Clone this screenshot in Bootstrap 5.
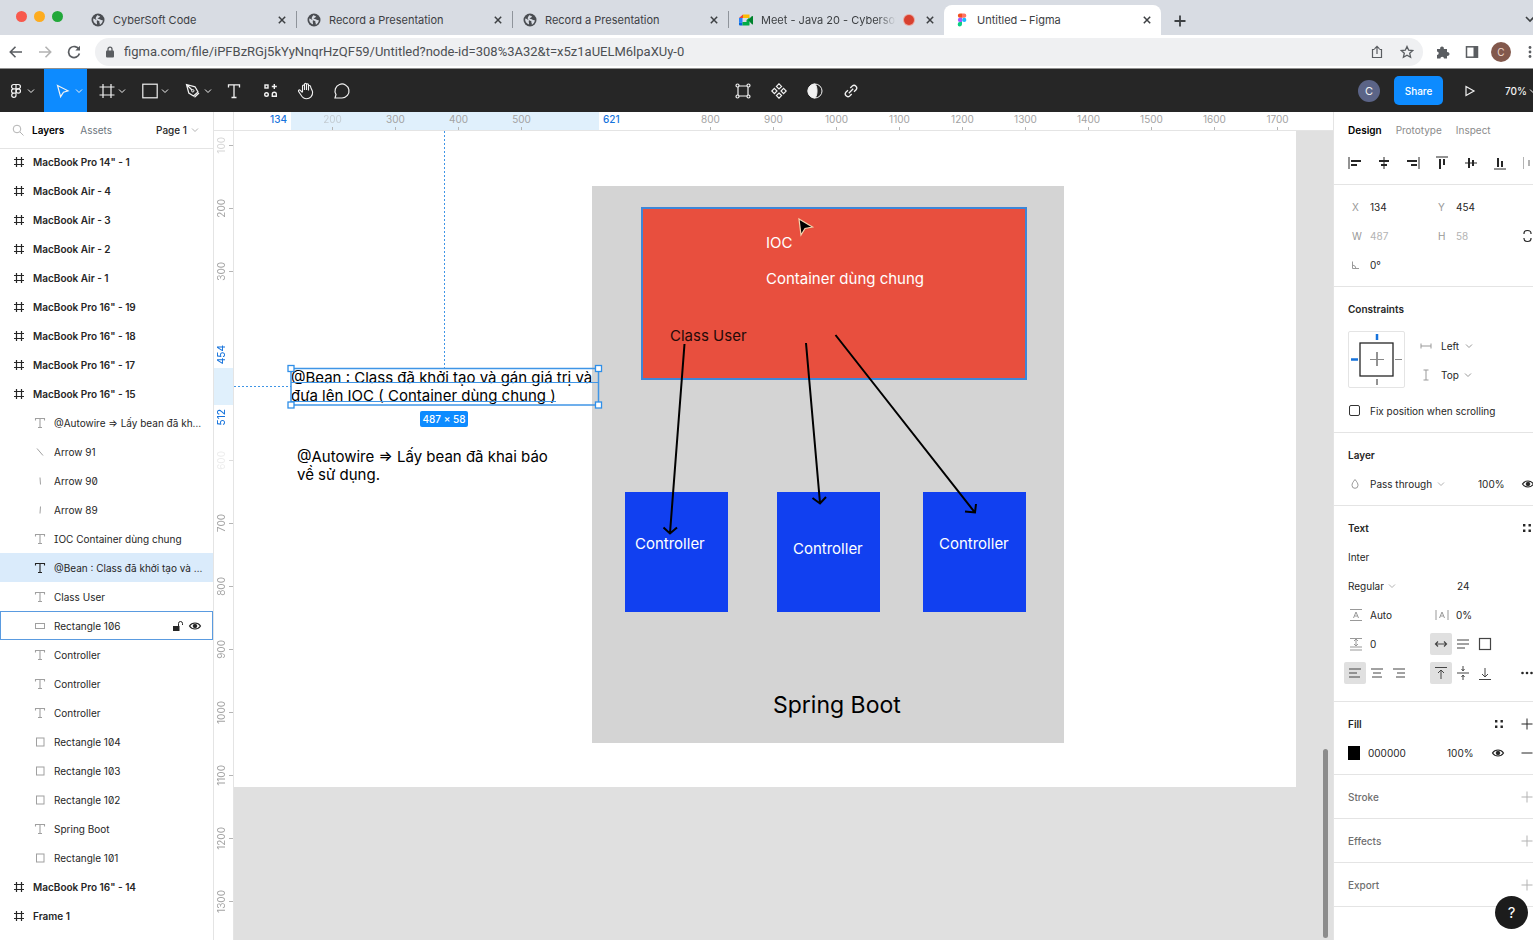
<!DOCTYPE html>
<html lang="en">
<head>
<meta charset="utf-8">
<meta name="viewport" content="width=device-width, initial-scale=1">
<title>Untitled – Figma</title>
<link href="https://cdn.jsdelivr.net/npm/bootstrap@5.3.0/dist/css/bootstrap.min.css" rel="stylesheet">
<style>
:root { --blue:#0d8bff; --line:#e4e4e4; --soft:#8b8b8b; --ink:#262626; }
body { font-family:"Inter","Liberation Sans",sans-serif; font-size:10px; line-height:16px; color:var(--ink); background:#fff; }
button, input, select { font:inherit; color:inherit; background:none; border:0; padding:0; margin:0; border-radius:0; }
input:focus-visible, select:focus-visible, button:focus-visible { outline:1px solid var(--blue); }
a { color:inherit; text-decoration:none; }
svg { display:block; flex:none; fill:none; stroke:currentColor; stroke-width:1; }
h2 { font-size:10px; line-height:16px; font-weight:600; margin:0; }
ul { list-style:none; margin:0; padding:0; }
.i8 { width:8px; height:8px; } .i12 { width:12px; height:12px; } .i14 { width:14px; height:14px; }
.i16 { width:16px; height:16px; } .i18 { width:18px; height:18px; }
.flat { stroke:none; }

/* browser window */
.tabstrip { height:35px; background:#d8dce3; font-size:11px; color:#3d4043; padding-left:16px; }
.lights { width:64px; height:34px; gap:7px; }
.light-dot { width:11px; height:11px; border-radius:50%; background:#f8594d; }
.light-dot.amber { background:#fdac1f; } .light-dot.green { background:#22a83a; }
.browser-tab { width:216px; height:30px; padding:0 10px 0 11px; position:relative; }
.browser-tab + .browser-tab::before { content:""; width:1px; height:17px; background:#8f949b; position:absolute; left:0; top:6px; }
.browser-tab.current { background:#fff; border-radius:8px 8px 0 0; width:217px; }
.browser-tab.current::before { display:none; }
.tab-title { flex:1; min-width:0; overflow:hidden; white-space:nowrap; }
.tab-title.fading { -webkit-mask-image:linear-gradient(90deg,#000 86%,transparent); mask-image:linear-gradient(90deg,#000 86%,transparent); }
.rec { width:10px; height:10px; border-radius:50%; background:#d8402f; box-shadow:0 0 0 1px #e9a59d; }
.new-tab { margin-left:13px; stroke-width:2; }
.addressbar { height:34px; color:#5a5d61; padding-left:9px; border-bottom:1px solid #8f8f8f; }
.nav-set { gap:15px; margin-right:14px; }
.omnibox { height:28px; border-radius:14px; background:#eff0f2; padding:0 9px; }
.omnibox input { flex:1; min-width:0; font-family:Roboto,"Inter",sans-serif; font-size:13px; color:#4c4f53; }
.ext-set { gap:15px; margin-left:13px; }
.profile { width:20px; height:20px; border-radius:50%; background:#82584c; color:#f0d9d0; margin-left:12px; }

/* editor toolbar */
.toolbar-dark { height:43px; background:#262626; color:#f2f2f2; }
.tool { width:36px; height:43px; display:flex; align-items:center; justify-content:center; }
.tool.wide { width:43px; gap:3px; padding-left:8px; }
.tool.menu-btn { width:44px; gap:5px; padding-left:0; }
.tool.picked { background:var(--blue); }
.tools-left { flex:12 1 0; } .tools-right { flex:11 1 0; }
.user-dot { width:22px; height:22px; border-radius:50%; background:#5b6487; font-size:11px; margin-right:14px; }
.share { width:49px; height:29px; border-radius:5px; background:var(--blue); color:#fff; font-weight:500; font-size:10px; }
.zoom-btn { gap:2px; }

/* layers */
.layers { width:213px; overflow:hidden; }
.panel-head { height:37px; border-bottom:1px solid var(--line); padding:0 14px 0 12px; }
.layers ul { margin-top:-2px; }
.layer { height:29px; padding:0 10px 0 13px; gap:8px; }
.layer > button { flex:1; min-width:0; text-align:left; overflow:hidden; text-overflow:ellipsis; white-space:nowrap; font-feature-settings:"zero","cv08"; }
.layer.frame-row { font-weight:600; }
.layer.child { padding-left:34px; }
.layer.child > svg { color:#a0a0a0; }
.layer.chosen { background:#daebfb; }
.layer.chosen > svg { color:#222; }
.layer.hovered { border:1px solid #5a9be0; padding-left:33px; }
.layer.hovered button.icon-only { flex:none; }
.layer.hovered button.icon-only + button.icon-only { margin-left:-4px; }

/* rulers */
.stage { display:grid; grid-template-columns:21px 1fr; grid-template-rows:19px 1fr; min-width:0; }
.corner, .ruler-v { border-left:1px solid var(--line); border-right:1px solid var(--line); }
.corner, .ruler-h { border-bottom:1px solid var(--line); }
.ruler-h, .ruler-v { position:relative; overflow:hidden; color:#a3a3a3; line-height:14px; }
.ruler-h { padding-left:4px; }
.ruler-h ol, .ruler-v ol { list-style:none; margin:0; padding:0; display:flex; }
.ruler-v ol { flex-direction:column; margin-top:-17px; }
.ruler-h li { width:63px; height:18px; flex:none; text-align:center; background:linear-gradient(#b5b5b5,#b5b5b5) bottom center/1px 3px no-repeat; }
.ruler-v li { height:63px; flex:none; display:flex; align-items:center; background:linear-gradient(#b5b5b5,#b5b5b5) right center/4px 1px no-repeat; }
.ruler-v span { writing-mode:vertical-rl; transform:rotate(180deg); line-height:14px; }
.ruler-h li.blank, .ruler-v li.blank { background:none; }
.faint { opacity:.45; }
.band-h { position:absolute; left:57px; top:0; width:308px; height:18px; background:#e0f0fc; }
.band-v { position:absolute; left:0; top:237px; width:19px; height:37px; background:#e0f0fc; }
.ruler-h ol { position:relative; }
.mark-no { position:absolute; color:#1673dc; font-weight:500; }
.mark-x1 { left:36px; top:0; } .mark-x2 { left:369px; top:0; }
.ruler-v .mark-y1 { left:0; top:214px; } .ruler-v .mark-y2 { left:0; top:278px; }

/* canvas */
.board { position:relative; overflow:hidden; background:#e0e0e0; color:#000; font-size:15px; line-height:18px; }
.board > * { position:absolute; white-space:pre; margin:0; }
#artboard { left:0; top:0; width:1062px; height:656px; background:#fff; }
#rect101 { left:358px; top:55px; width:472px; height:557px; background:#d4d4d4; }
#rect106 { left:407px; top:76px; width:386px; height:173px; background:#e84f3e; border:2px solid #3d86d8; }
.blue-rect { top:361px; width:103px; height:120px; background:#1140f0; }
#rect104 { left:391px; } #rect103 { left:543px; } #rect102 { left:689px; }
.pale { color:#fff; }
#txtIoc { left:532px; top:103px; }
#txtUser { left:436px; top:196px; color:#240a08; }
#txtC1 { left:401px; top:404px; } #txtC2 { left:559px; top:409px; } #txtC3 { left:705px; top:404px; }
#txtSpring { left:539px; top:560px; font-size:23px; line-height:28px; }
#txtBean { left:57px; top:238px; } #txtAuto { left:63px; top:317px; }
#overlay { left:0; top:0; width:1098px; height:809px; }
#sizeTag { left:186px; top:280px; width:48px; height:16px; border-radius:2px; background:var(--blue); color:#fff; font-size:10px; line-height:16px; font-weight:500; text-align:center; }
#scrollThumb { right:5px; top:618px; bottom:2px; width:5px; border-radius:3px; background:#8c8c8c; }

/* properties */
.props { width:200px; border-left:1px solid var(--line); overflow:hidden; }
.props section { padding:7px 0 7px 14px; border-bottom:1px solid var(--line); }
.props .tabs { height:37px; padding:0 0 2px 14px; gap:14px; color:var(--soft); }
.aligns { height:36px; padding-left:6px; border-bottom:1px solid var(--line); }
.aligns button { width:29px; height:27px; flex:none; display:flex; align-items:center; justify-content:center; }
.prow { height:29px; display:flex; align-items:center; }
.slot { width:22px; flex:none; color:#999; padding-left:1px; }
.slot.letter { padding-left:4px; }
.val { width:64px; flex:none; display:flex; align-items:center; gap:5px; }
.val.tight { width:60px; }
.val input, .val-short { width:44px; }
.val svg.i8 { color:#999; }
select { appearance:none; -webkit-appearance:none; }
.dim { color:#b3b3b3; }
.to-end { margin-left:auto; }
.cons { height:57px; margin:8px 0; gap:14px; }
.cons-box { width:57px; height:57px; border:1px solid var(--line); border-radius:2px; }
.tick { appearance:none; width:11px; height:11px; border:1px solid #333; border-radius:2px; }
.tick:checked { background:var(--blue); }
.toggle { width:22px; height:22px; display:flex; align-items:center; justify-content:center; border-radius:2px; color:#444; }
.toggle.on { background:#e0e0e0; }
.toggle-set { width:86px; margin-left:-4px; }
.weight-set { width:109px; } .opacity-box { width:43px; } .hex-box { width:79px; }
.props .text-sec { padding-bottom:14px; }
.swatch { width:14px; height:14px; background:#000; margin-right:8px; }
.props section.closed { height:44px; color:#6f6f6f; }
.props section.closed h2 { font-weight:500; }
.help { position:fixed; right:5px; bottom:11px; width:33px; height:33px; border-radius:50%; background:#1c1c1c; color:#fff; font-size:15px; }
</style>
</head>
<body class="vh-100 overflow-hidden d-flex flex-column">
<svg width="0" height="0" class="position-absolute" aria-hidden="true">
  <symbol id="chev" viewBox="0 0 8 8"><path d="M1 2.500 4 5.500 7 2.500"/></symbol>
  <symbol id="x" viewBox="0 0 8 8"><path d="M.8.8l6.400 6.400M7.200.8.8 7.200" stroke-width="1.500"/></symbol>
  <symbol id="plus" viewBox="0 0 12 12"><path d="M6 .5v11M.5 6h11"/></symbol>
  <symbol id="globe" viewBox="0 0 14 14"><circle cx="7" cy="7" r="6.500" fill="#4a4d52" stroke="none"/><path d="M2.200 5.600c1.600.2 2.200 1.400 3.600 1.400.6.900-.5 1.500.1 2.400l.2 2c-2.800-.6-4.300-3-3.900-5.800zM6.300 2c.6 1.200 2.200.4 2.700 1.700-.6 1.200-1.900.6-2.500 1.700.9.700 2.100.2 2.900 1.200.5.700 1.500.6 2.500.7-.3 2-1.500 3.600-3.100 4.400.5-1.700-.9-2-.4-3.500C7 7.600 5 7 4.700 5.400 4.600 4 6 3.200 6.300 2z" fill="#d8dce3" stroke="none"/></symbol>
  <symbol id="hash" viewBox="0 0 12 12"><path d="M3.500 1v10M8.500 1v10M1 3.500h10M1 8.500h10" stroke-width="1.200"/></symbol>
  <symbol id="tee" viewBox="0 0 12 12"><path d="M1.500 3.500v-2h9v2M6 1.500v9M4 10.500h4" stroke-width="1.100"/></symbol>
  <symbol id="sq" viewBox="0 0 12 12"><rect x="2.500" y="2" width="7.500" height="8"/></symbol>
  <symbol id="wide" viewBox="0 0 12 12"><rect x="1.500" y="3.500" width="9" height="5"/></symbol>
  <symbol id="eye" viewBox="0 0 14 12"><path d="M1.500 6c2.500-4 8.500-4 11 0-2.500 4-8.500 4-11 0z" stroke-width="1.200"/><circle cx="7" cy="6" r="1.800" fill="currentColor"/></symbol>
  <symbol id="dots4" viewBox="0 0 12 12"><path d="M2 2h2.400v2.400H2zM7.500 2h2.400v2.400H7.500zM2 7.500h2.400v2.400H2zM7.500 7.500h2.400v2.400H7.500z" fill="currentColor" stroke="none"/></symbol>
</svg>

<header>
  <div class="tabstrip d-flex align-items-end">
    <div class="lights d-flex align-items-center pb-1">
      <span class="light-dot"></span><span class="light-dot amber"></span><span class="light-dot green"></span>
    </div>
    <div class="browser-tab d-flex align-items-center gap-2"><svg class="i14"><use href="#globe"/></svg><a href="#" class="tab-title">CyberSoft Code</a><button type="button" aria-label="Close tab"><svg class="i8"><use href="#x"/></svg></button></div>
    <div class="browser-tab d-flex align-items-center gap-2"><svg class="i14"><use href="#globe"/></svg><a href="#" class="tab-title">Record a Presentation</a><button type="button" aria-label="Close tab"><svg class="i8"><use href="#x"/></svg></button></div>
    <div class="browser-tab d-flex align-items-center gap-2"><svg class="i14"><use href="#globe"/></svg><a href="#" class="tab-title">Record a Presentation</a><button type="button" aria-label="Close tab"><svg class="i8"><use href="#x"/></svg></button></div>
    <div class="browser-tab d-flex align-items-center gap-2">
      <svg class="i14 flat" viewBox="0 0 14 14"><path d="M0 5 4 1.500V5z" fill="#ea4335"/><path d="M4 1.500h6.500V5H4z" fill="#fbbc04"/><path d="M0 5h3.500v4.500H0z" fill="#2684fc"/><path d="M0 9.500h3.500v3H1q-1 0-1-1z" fill="#0066da"/><path d="M3.500 9h4v-2l3-2.500v7.500q0 .5-.8.500H3.500z" fill="#00ac47"/><path d="M9 7l4-4q1-.3 1 .5v7.500q0 .7-1 .2z" fill="#00832d"/></svg>
      <a href="#" class="tab-title fading">Meet - Java 20 - Cybersoft</a><span class="rec"></span><button type="button" class="ms-1" aria-label="Close tab"><svg class="i8"><use href="#x"/></svg></button></div>
    <div class="browser-tab current d-flex align-items-center gap-2">
      <svg class="i14 flat" viewBox="0 0 14 14"><path d="M5 .5h2v4.300H5a2.150 2.150 0 010-4.300z" fill="#f24e1e"/><path d="M7 .5h2.200a2.150 2.150 0 010 4.300H7z" fill="#ff7262"/><path d="M5 4.800h2v4.300H5a2.150 2.150 0 010-4.300z" fill="#a259ff"/><circle cx="9.200" cy="6.950" r="2.150" fill="#1abcfe"/><path d="M5 9.100h2v2.200a2.150 2.150 0 11-2-2.200z" fill="#0acf83"/></svg>
      <a href="#" class="tab-title">Untitled – Figma</a><button type="button" aria-label="Close tab"><svg class="i8"><use href="#x"/></svg></button></div>
    <button type="button" class="new-tab mb-2" aria-label="New tab"><svg class="i12" viewBox="0 0 12 12"><path d="M6 .5v11M.5 6h11" stroke-width="1.800"/></svg></button>
    <button type="button" class="ms-auto mb-2 pb-1" aria-label="Search tabs"><svg width="8" height="8" viewBox="0 0 8 8"><path d="M1 2l4 4 4-4" stroke-width="1.600"/></svg></button>
  </div>
  <div class="addressbar d-flex align-items-center">
    <div class="nav-set d-flex">
      <button type="button" aria-label="Back"><svg class="i14" viewBox="0 0 14 14"><path d="M13 7H1.500M6.500 1.800 1.300 7l5.200 5.200" stroke-width="1.600"/></svg></button>
      <button type="button" aria-label="Forward" class="dim"><svg class="i14" viewBox="0 0 14 14"><path d="M1 7h11.500M7.500 1.800 12.700 7l-5.200 5.200" stroke-width="1.600"/></svg></button>
      <button type="button" aria-label="Reload"><svg class="i14" viewBox="0 0 14 14"><path d="M12 4.500A5.500 5.500 0 1012.400 8.500" stroke-width="1.700"/><path d="M13 .8v4.700H8.300z" fill="currentColor" stroke="none"/></svg></button>
    </div>
    <div class="omnibox flex-grow-1 d-flex align-items-center">
      <svg class="i12 me-2" viewBox="0 0 12 12"><rect x="2" y="4.500" width="8" height="7" rx="1" fill="currentColor" stroke="none"/><path d="M4 5V3.200a2 2 0 014 0V5" stroke-width="1.300"/></svg>
      <input type="text" aria-label="Address" value="figma.com/file/iPFBzRGj5kYyNnqrHzQF59/Untitled?node-id=308%3A32&amp;t=x5z1aUELM6lpaXUy-0">
      <button type="button" aria-label="Share page" class="me-3"><svg class="i14" viewBox="0 0 14 14"><path d="M4.500 4.500H2.500V12.500h9V4.500h-2M7 9V1.500M4.500 3.800 7 1.300l2.500 2.500" stroke-width="1.200"/></svg></button>
      <button type="button" aria-label="Bookmark"><svg class="i14" viewBox="0 0 14 14"><path d="M7 1.500l1.700 3.700 4 .4-3 2.700.9 4L7 10.200 3.400 12.300l.9-4-3-2.700 4-.4z" stroke-width="1.300"/></svg></button>
    </div>
    <div class="ext-set d-flex">
      <button type="button" aria-label="Extensions"><svg class="i14" viewBox="0 0 14 14"><path d="M1 4h3.200a1.900 1.900 0 113.600 0H11v3.200a1.900 1.900 0 110 3.600V13.500H8a1.800 1.800 0 10-3.600 0H1v-3.500a1.700 1.700 0 100-3.400z" fill="currentColor" stroke="none"/></svg></button>
      <button type="button" aria-label="Side panel"><svg class="i14" viewBox="0 0 14 14"><rect x="1.500" y="1.800" width="11" height="10.400" stroke-width="1.500"/><path d="M8.500 1.500h4v11h-4z" fill="currentColor" stroke="none"/></svg></button>
    </div>
    <button type="button" class="profile me-3">C</button>
    <button type="button" aria-label="Menu"><svg class="flat" width="6" height="14" viewBox="0 0 6 14"><g fill="currentColor"><circle cx="3" cy="2.500" r="1.400"/><circle cx="3" cy="7" r="1.400"/><circle cx="3" cy="11.500" r="1.400"/></g></svg></button>
  </div>
  <div class="toolbar-dark d-flex">
    <div class="tools-left d-flex">
      <button type="button" class="tool menu-btn" aria-label="Main menu"><svg width="12" height="16" viewBox="0 0 12 16"><path d="M6 1.500H3.700a2.150 2.150 0 000 4.300H6zM6 1.500h2.300a2.150 2.150 0 010 4.300H6zM6 5.800H3.700a2.150 2.150 0 000 4.300H6zM6 10.100H3.700A2.150 2.150 0 106 12.300z" stroke-width="1.200"/><circle cx="8.300" cy="7.950" r="2.150" stroke-width="1.200"/></svg><svg class="i8"><use href="#chev"/></svg></button>
      <button type="button" class="tool wide picked" aria-label="Move"><svg class="i16" viewBox="0 0 16 16"><path d="M1.500 2.500l10.500 5.300-4.500 1.400-2.900 4.500z" stroke-width="1.200"/></svg><svg class="i8"><use href="#chev"/></svg></button>
      <button type="button" class="tool wide" aria-label="Frame"><svg class="i16" viewBox="0 0 16 16"><path d="M4 1v14M12 1v14M.5 4h15M.5 12h15" stroke-width="1.200"/></svg><svg class="i8"><use href="#chev"/></svg></button>
      <button type="button" class="tool wide" aria-label="Shape"><svg class="i16" viewBox="0 0 16 16"><rect x=".8" y="1.200" width="14.400" height="13.600" stroke-width="1.200"/></svg><svg class="i8"><use href="#chev"/></svg></button>
      <button type="button" class="tool wide" aria-label="Pen"><svg class="i16" viewBox="0 0 16 16"><path d="M1.500 1.500l8.500 2.300 3 5.200-4.500 4L3.800 10zM1.500 1.500l5.500 5.500M9.500 14.300l4.500-4.300" stroke-width="1.200"/><circle cx="7.800" cy="7.800" r="1.200"/></svg><svg class="i8"><use href="#chev"/></svg></button>
      <button type="button" class="tool" aria-label="Text"><svg class="i16" viewBox="0 0 16 16"><path d="M2.500 4.500V1.800h11v2.700M8 1.800v12.700M5.500 14.500h5" stroke-width="1.300"/></svg></button>
      <button type="button" class="tool" aria-label="Resources"><svg class="i16" viewBox="0 0 16 16"><g stroke-width="1.400"><rect x="3" y="2" width="3" height="3"/><path d="M12.300 1v5M9.800 3.500h5"/><circle cx="4.500" cy="11.500" r="1.800"/><path d="M10.300 13.300v-2a2 2 0 014 0v2z"/></g></svg></button>
      <button type="button" class="tool" aria-label="Hand"><svg class="i18" viewBox="0 0 18 18"><path d="M5.500 10V4a1 1 0 012 0v4M7.500 8V2.300a1 1 0 012 0V8M9.500 8V2.800a1 1 0 012 0v5.700M11.500 8.500V4.500a1.050 1.050 0 012.100 0c0 2 1.600 3 2 5.500.3 4-2.600 6.800-6.100 6.800-3 0-4.500-1.800-5.700-4L1.500 9.300c-.3-1.200 1-1.800 1.800-1l2.200 2.200" stroke-width="1.100"/></svg></button>
      <button type="button" class="tool" aria-label="Comment"><svg class="i18" viewBox="0 0 18 18"><path d="M2 16h7a7 7 0 10-6-3.400z" stroke-width="1.200"/></svg></button>
    </div>
    <div class="d-flex">
      <button type="button" class="tool" aria-label="Edit object"><svg class="i16" viewBox="0 0 16 16"><g stroke-width="1.200"><path d="M4 3h8M4 13h8M3 4v8M13 4v8"/><circle cx="2.500" cy="2.500" r="1.500"/><circle cx="13.500" cy="2.500" r="1.500"/><circle cx="2.500" cy="13.500" r="1.500"/><circle cx="13.500" cy="13.500" r="1.500"/></g></svg></button>
      <button type="button" class="tool" aria-label="Component"><svg class="i16" viewBox="0 0 16 16"><path d="M8 .8l2.600 2.600L8 6 5.400 3.400zM8 10l2.600 2.600L8 15.200l-2.600-2.600zM3.400 5.400 6 8l-2.600 2.600L.8 8zM12.600 5.400 15.200 8l-2.600 2.600L10 8z" stroke-width="1.200"/></svg></button>
      <button type="button" class="tool" aria-label="Mask"><svg class="i16" viewBox="0 0 16 16"><circle cx="8" cy="8" r="7"/><path d="M8 1a7 7 0 000 14c1.500-2 2-4 2-7S9.500 3 8 1z" fill="currentColor"/></svg></button>
      <button type="button" class="tool" aria-label="Link"><svg class="i16" viewBox="0 0 16 16"><path d="M7.300 5 9.300 3a2.700 2.700 0 013.800 3.800L11 8.800M8.700 11 6.700 13a2.700 2.700 0 01-3.800-3.800L5 7.200M5.800 10.200l4.400-4.400" stroke-width="1.300"/></svg></button>
    </div>
    <div class="tools-right d-flex align-items-center justify-content-end">
      <span class="user-dot d-flex align-items-center justify-content-center">C</span>
      <button type="button" class="share me-3">Share</button>
      <button type="button" class="me-4 ms-1" aria-label="Present"><svg class="i14" viewBox="0 0 14 14"><path d="M3 2.500 11 7l-8 4.500z" stroke-width="1.200"/></svg></button>
      <button type="button" class="zoom-btn d-flex align-items-center ms-1 fw-medium">70% <svg width="4" height="8" viewBox="0 0 4 8"><path d="M1 2.500 4 5.500 7 2.500"/></svg></button>
    </div>
  </div>
</header>

<main class="d-flex flex-grow-1 overflow-hidden">
  <aside class="layers d-flex flex-column flex-shrink-0">
    <div class="panel-head d-flex align-items-center flex-shrink-0">
      <button type="button" class="dim" aria-label="Search layers"><svg class="i12" viewBox="0 0 12 12"><circle cx="5" cy="5" r="3.800"/><path d="M8 8l3.500 3.500"/></svg></button>
      <a href="#" class="fw-semibold ms-2 text-black">Layers</a><a href="#" class="ms-3 text-secondary">Assets</a>
      <button type="button" class="ms-auto d-flex align-items-center gap-1 fw-medium">Page 1 <svg class="i8 dim"><use href="#chev"/></svg></button>
    </div>
    <ul>
      <li class="layer frame-row d-flex align-items-center"><svg class="i12"><use href="#hash"/></svg><button type="button">MacBook Pro 14" - 1</button></li>
      <li class="layer frame-row d-flex align-items-center"><svg class="i12"><use href="#hash"/></svg><button type="button">MacBook Air - 4</button></li>
      <li class="layer frame-row d-flex align-items-center"><svg class="i12"><use href="#hash"/></svg><button type="button">MacBook Air - 3</button></li>
      <li class="layer frame-row d-flex align-items-center"><svg class="i12"><use href="#hash"/></svg><button type="button">MacBook Air - 2</button></li>
      <li class="layer frame-row d-flex align-items-center"><svg class="i12"><use href="#hash"/></svg><button type="button">MacBook Air - 1</button></li>
      <li class="layer frame-row d-flex align-items-center"><svg class="i12"><use href="#hash"/></svg><button type="button">MacBook Pro 16" - 19</button></li>
      <li class="layer frame-row d-flex align-items-center"><svg class="i12"><use href="#hash"/></svg><button type="button">MacBook Pro 16" - 18</button></li>
      <li class="layer frame-row d-flex align-items-center"><svg class="i12"><use href="#hash"/></svg><button type="button">MacBook Pro 16" - 17</button></li>
      <li class="layer frame-row d-flex align-items-center"><svg class="i12"><use href="#hash"/></svg><button type="button">MacBook Pro 16" - 15</button></li>
      <li class="layer child d-flex align-items-center"><svg class="i12"><use href="#tee"/></svg><button type="button">@Autowire ⇒ Lấy bean đã khai báo về sử dụng.</button></li>
      <li class="layer child d-flex align-items-center"><svg class="i12" viewBox="0 0 12 12"><path d="M3 2.500l6 7"/></svg><button type="button">Arrow 91</button></li>
      <li class="layer child d-flex align-items-center"><svg class="i12" viewBox="0 0 12 12"><path d="M6 2.500l.5 7"/></svg><button type="button">Arrow 90</button></li>
      <li class="layer child d-flex align-items-center"><svg class="i12" viewBox="0 0 12 12"><path d="M6.500 2.500 6 9.500"/></svg><button type="button">Arrow 89</button></li>
      <li class="layer child d-flex align-items-center"><svg class="i12"><use href="#tee"/></svg><button type="button">IOC Container dùng chung</button></li>
      <li class="layer child chosen d-flex align-items-center"><svg class="i12"><use href="#tee"/></svg><button type="button">@Bean : Class đã khởi tạo và gán giá trị</button></li>
      <li class="layer child d-flex align-items-center"><svg class="i12"><use href="#tee"/></svg><button type="button">Class User</button></li>
      <li class="layer child hovered d-flex align-items-center"><svg class="i12"><use href="#wide"/></svg><button type="button">Rectangle 106</button><button type="button" class="icon-only" aria-label="Unlock"><svg class="i12" viewBox="0 0 12 12"><path d="M1 6h6.500v5H1z" fill="currentColor" stroke="none"/><path d="M6.500 6V3.500a2 2 0 014 0V5"/></svg></button><button type="button" class="icon-only" aria-label="Hide"><svg width="14" height="12"><use href="#eye"/></svg></button></li>
      <li class="layer child d-flex align-items-center"><svg class="i12"><use href="#tee"/></svg><button type="button">Controller</button></li>
      <li class="layer child d-flex align-items-center"><svg class="i12"><use href="#tee"/></svg><button type="button">Controller</button></li>
      <li class="layer child d-flex align-items-center"><svg class="i12"><use href="#tee"/></svg><button type="button">Controller</button></li>
      <li class="layer child d-flex align-items-center"><svg class="i12"><use href="#sq"/></svg><button type="button">Rectangle 104</button></li>
      <li class="layer child d-flex align-items-center"><svg class="i12"><use href="#sq"/></svg><button type="button">Rectangle 103</button></li>
      <li class="layer child d-flex align-items-center"><svg class="i12"><use href="#sq"/></svg><button type="button">Rectangle 102</button></li>
      <li class="layer child d-flex align-items-center"><svg class="i12"><use href="#tee"/></svg><button type="button">Spring Boot</button></li>
      <li class="layer child d-flex align-items-center"><svg class="i12"><use href="#sq"/></svg><button type="button">Rectangle 101</button></li>
      <li class="layer frame-row d-flex align-items-center"><svg class="i12"><use href="#hash"/></svg><button type="button">MacBook Pro 16" - 14</button></li>
      <li class="layer frame-row d-flex align-items-center"><svg class="i12"><use href="#hash"/></svg><button type="button">Frame 1</button></li>
      <li class="layer frame-row d-flex align-items-center"><svg class="i12"><use href="#hash"/></svg><button type="button">MacBook Pro 16" - 13</button></li>
    </ul>
  </aside>

  <div class="stage flex-grow-1">
    <div class="corner"></div>
    <div class="ruler-h">
      <div class="band-h"></div>
      <ol><li class="blank"></li><li><span class="faint">200</span></li><li>300</li><li>400</li><li>500</li><li class="blank"></li><li class="blank"></li><li>800</li><li>900</li><li>1000</li><li>1100</li><li>1200</li><li>1300</li><li>1400</li><li>1500</li><li>1600</li><li>1700</li></ol>
      <span class="mark-no mark-x1">134</span><span class="mark-no mark-x2">621</span>
    </div>
    <div class="ruler-v">
      <div class="band-v"></div>
      <ol><li><span class="faint">100</span></li><li><span>200</span></li><li><span>300</span></li><li class="blank"></li><li class="blank"></li><li class="faint"><span class="faint">600</span></li><li><span>700</span></li><li><span>800</span></li><li><span>900</span></li><li><span>1000</span></li><li><span>1100</span></li><li><span>1200</span></li><li><span>1300</span></li></ol>
      <span class="mark-no mark-y1">454</span><span class="mark-no mark-y2">512</span>
    </div>
    <div class="board">
      <div id="artboard"></div>
      <div id="rect101"></div>
      <div id="rect106"></div>
      <div id="rect104" class="blue-rect"></div><div id="rect103" class="blue-rect"></div><div id="rect102" class="blue-rect"></div>
      <p id="txtIoc" class="pale">IOC

Container dùng chung</p>
      <p id="txtUser">Class User</p>
      <p id="txtC1" class="pale">Controller</p><p id="txtC2" class="pale">Controller</p><p id="txtC3" class="pale">Controller</p>
      <p id="txtSpring">Spring Boot</p>
      <p id="txtBean">@Bean : Class đã khởi tạo và gán giá trị và
đưa lên IOC ( Container dùng chung )</p>
      <p id="txtAuto">@Autowire ⇒ Lấy bean đã khai báo
về sử dụng.</p>
      <svg id="overlay" viewBox="0 0 1098 809" aria-hidden="true">
        <g stroke="#000" stroke-width="2"><path d="M450.500 213 436 402M429.500 396.500l6.500 6 7-6"/><path d="M572 212l14 160M578.500 367l7.500 5.500 6-6.500"/><path d="M601.500 204l139 177M731 380.500l10 1 1-8.500"/></g>
        <g stroke="#3f95e6"><path d="M210.500 0v237M0 255.500h57" stroke-dasharray="2 2"/><path d="M57 251.500h307M57 270.500h265"/><rect x="57" y="237.500" width="307.500" height="36.500" stroke-width="1.500"/></g>
        <g fill="#fff" stroke="#2f8fe8" stroke-width="1.300"><rect x="54" y="234.500" width="6" height="6"/><rect x="361.500" y="234.500" width="6" height="6"/><rect x="54" y="271" width="6" height="6"/><rect x="361.500" y="271" width="6" height="6"/></g>
        <path d="M565 88l13.500 8-7.500 1.500-4 6.500z" fill="#000" stroke="#f3d6b0" stroke-width="1.200"/>
      </svg>
      <div id="sizeTag">487 × 58</div>
      <div id="scrollThumb"></div>
    </div>
  </div>

  <aside class="props flex-shrink-0">
    <div class="tabs d-flex align-items-center"><a href="#" class="fw-semibold text-black">Design</a><a href="#">Prototype</a><a href="#">Inspect</a></div>
    <div class="aligns d-flex align-items-start">
      <button type="button" aria-label="Align left"><svg class="i14" viewBox="0 0 14 14"><path d="M1 1v12"/><path d="M3 5h10M3 9h6" stroke-width="2"/></svg></button>
      <button type="button" aria-label="Align horizontal centers"><svg class="i14" viewBox="0 0 14 14"><path d="M7 1v12"/><path d="M2 5h10M4 9h6" stroke-width="2"/></svg></button>
      <button type="button" aria-label="Align right"><svg class="i14" viewBox="0 0 14 14"><path d="M13 1v12"/><path d="M1 5h10M5 9h6" stroke-width="2"/></svg></button>
      <button type="button" aria-label="Align top"><svg class="i14" viewBox="0 0 14 14"><path d="M1 1h12"/><path d="M5 3v10M9 3v6" stroke-width="2"/></svg></button>
      <button type="button" aria-label="Align vertical centers"><svg class="i14" viewBox="0 0 14 14"><path d="M1 7h12"/><path d="M5 2v10M9 4v6" stroke-width="2"/></svg></button>
      <button type="button" aria-label="Align bottom"><svg class="i14" viewBox="0 0 14 14"><path d="M1 13h12"/><path d="M5 2v9M9 5v6" stroke-width="2"/></svg></button>
      <button type="button" class="dim" aria-label="Distribute"><svg class="i14" viewBox="0 0 14 14"><path d="M1.500 1v12M12.500 1v12"/><path d="M7 4v6" stroke-width="2"/></svg></button>
    </div>
    <section>
      <div class="prow"><label class="slot letter" for="fx">X</label><span class="val"><input id="fx" value="134"></span><label class="slot letter" for="fy">Y</label><input id="fy" class="val-short" value="454"></div>
      <div class="prow"><label class="slot letter" for="fw">W</label><span class="val dim"><input id="fw" value="487"></span><label class="slot letter" for="fh">H</label><input id="fh" class="val-short dim" value="58"><button type="button" class="to-end" aria-label="Constrain proportions"><svg width="12" height="14" viewBox="0 0 12 14"><path d="M3 5V4.500a3.500 3 0 017 0V5M3 9v.5a3.500 3 0 007 0V9" stroke-width="1.200"/></svg></button></div>
      <div class="prow"><label class="slot" for="fr"><svg class="i12" viewBox="0 0 12 12" aria-label="Rotation"><path d="M3.500 2.500v7h6.500M3.500 6a4 4 0 013.500 3.500"/></svg></label><span class="val"><input id="fr" value="0°"></span></div>
    </section>
    <section>
      <div class="prow"><h2>Constraints</h2></div>
      <div class="cons d-flex">
        <svg class="cons-box" viewBox="0 0 55 55"><rect x="11" y="11" width="33" height="33" stroke-width="1.300"/><path d="M28 20v14M28 47v6"/><path d="M21 27.500h14M46 27.500h7" stroke="#888"/><path d="M28 2v6M2 27.500h7" stroke="#1673dc" stroke-width="2.500"/></svg>
        <div><div class="prow"><span class="slot"><svg class="i12" viewBox="0 0 12 12"><path d="M1 3.500v5M11 3.500v5M1 6h10"/></svg></span><span class="val"><select aria-label="Horizontal constraint"><option>Left</option></select><svg class="i8"><use href="#chev"/></svg></span></div>
        <div class="prow"><span class="slot"><svg class="i12" viewBox="0 0 12 12"><path d="M3.500 1h5M3.500 11h5M6 1v10"/></svg></span><span class="val"><select aria-label="Vertical constraint"><option>Top</option></select><svg class="i8"><use href="#chev"/></svg></span></div></div>
      </div>
      <div class="prow"><span class="slot d-flex"><input type="checkbox" id="fix" class="tick"></span><label for="fix">Fix position when scrolling</label></div>
    </section>
    <section>
      <div class="prow"><h2>Layer</h2></div>
      <div class="prow"><span class="slot"><svg class="i12" viewBox="0 0 12 12"><path d="M6 1.500C4 4 3 5.500 3 7.300a3 3 0 006 0C9 5.500 8 4 6 1.500z"/></svg></span><span class="d-flex align-items-center gap-1"><select aria-label="Blend mode"><option>Pass through</option></select><svg class="i8 dim"><use href="#chev"/></svg></span><input class="to-end opacity-box" aria-label="Layer opacity" value="100%"><button type="button" aria-label="Toggle layer"><svg width="12" height="12" viewBox="0 0 12 12"><path d="M1.500 6c2.500-4 8.500-4 11 0-2.500 4-8.500 4-11 0z" stroke-width="1.200"/><circle cx="7" cy="6" r="1.800" fill="currentColor"/></svg></button></div>
    </section>
    <section class="text-sec">
      <div class="prow"><h2>Text</h2><button type="button" class="to-end" aria-label="Text styles"><svg class="i12"><use href="#dots4"/></svg></button></div>
      <div class="prow"><input aria-label="Font family" value="Inter"></div>
      <div class="prow"><span class="weight-set d-flex align-items-center gap-1"><select aria-label="Font weight"><option>Regular</option></select><svg class="i8 dim"><use href="#chev"/></svg></span><input class="val-short" aria-label="Font size" value="24"></div>
      <div class="prow"><label class="slot" for="lh"><svg class="i14" viewBox="0 0 14 14" aria-label="Line height"><path d="M1 1.500h12M1 12.500h12M4.500 10 7 4l2.500 6M5.500 8h3"/></svg></label><span class="val"><input id="lh" value="Auto"></span><label class="slot" for="ls"><svg class="i14" viewBox="0 0 14 14" aria-label="Letter spacing"><path d="M1 2v10M13 2v10M4.500 10 7 4l2.500 6M5.500 8h3"/></svg></label><input id="ls" class="val-short" value="0%"></div>
      <div class="prow"><label class="slot" for="ps"><svg class="i14" viewBox="0 0 14 14" aria-label="Paragraph spacing"><path d="M1 1.500h12M1 10h12M1 13h12M7 2v7M5 4l2-2 2 2M5 7l2 2 2-2"/></svg></label><span class="val tight"><input id="ps" value="0"></span>
        <button type="button" class="toggle on" aria-label="Auto width"><svg class="i14" viewBox="0 0 14 14"><path d="M1.500 7h11M4 4.500 1.500 7 4 9.500M10 4.500 12.500 7 10 9.500" stroke-width="1.200"/></svg></button><button type="button" class="toggle" aria-label="Auto height"><svg class="i14" viewBox="0 0 14 14"><path d="M1 3h12M1 7h12M1 11h8"/></svg></button><button type="button" class="toggle" aria-label="Fixed size"><svg class="i14" viewBox="0 0 14 14"><rect x="1.500" y="1.500" width="11" height="11" stroke-width="1.200"/></svg></button></div>
      <div class="prow"><span class="toggle-set d-flex"><button type="button" class="toggle on" aria-label="Text left"><svg class="i14" viewBox="0 0 14 14"><path d="M1 3h12M1 7h8M1 11h11" stroke-width="1.200"/></svg></button><button type="button" class="toggle" aria-label="Text center"><svg class="i14" viewBox="0 0 14 14"><path d="M1 3h12M3 7h8M2 11h10"/></svg></button><button type="button" class="toggle" aria-label="Text right"><svg class="i14" viewBox="0 0 14 14"><path d="M1 3h12M5 7h8M4 11h9"/></svg></button></span>
        <button type="button" class="toggle on" aria-label="Text top"><svg class="i14" viewBox="0 0 14 14"><path d="M1 1.500h12M7 13V4M4 7l3-3 3 3"/></svg></button><button type="button" class="toggle" aria-label="Text middle"><svg class="i14" viewBox="0 0 14 14"><path d="M1 7h12M7 0v4M7 14v-4M5.500 3 7 5l1.500-2M5.500 11 7 9l1.500 2"/></svg></button><button type="button" class="toggle" aria-label="Text bottom"><svg class="i14" viewBox="0 0 14 14"><path d="M1 13.500h12M7 2v9M4 8l3 3 3-3"/></svg></button>
        <button type="button" class="to-end" aria-label="More"><svg class="i12 flat" viewBox="0 0 12 12"><g fill="currentColor"><circle cx="1.500" cy="6" r="1.300"/><circle cx="6" cy="6" r="1.300"/><circle cx="10.500" cy="6" r="1.300"/></g></svg></button></div>
    </section>
    <section>
      <div class="prow"><h2>Fill</h2><button type="button" class="to-end me-3" aria-label="Fill styles"><svg class="i12"><use href="#dots4"/></svg></button><button type="button" aria-label="Add fill"><svg class="i12"><use href="#plus"/></svg></button></div>
      <div class="prow"><span class="swatch"></span><input class="hex-box" aria-label="Fill colour" value="000000"><input class="val-short" aria-label="Fill opacity" value="100%"><button type="button" class="to-end me-3" aria-label="Toggle fill"><svg width="14" height="12"><use href="#eye"/></svg></button><button type="button" aria-label="Remove fill"><svg class="i12" viewBox="0 0 12 12"><path d="M.5 6h11"/></svg></button></div>
    </section>
    <section class="closed"><div class="prow"><h2>Stroke</h2><button type="button" class="to-end dim" aria-label="Add stroke"><svg class="i12"><use href="#plus"/></svg></button></div></section>
    <section class="closed"><div class="prow"><h2>Effects</h2><button type="button" class="to-end dim" aria-label="Add effect"><svg class="i12"><use href="#plus"/></svg></button></div></section>
    <section class="closed"><div class="prow"><h2>Export</h2><button type="button" class="to-end dim" aria-label="Add export"><svg class="i12"><use href="#plus"/></svg></button></div></section>
  </aside>
</main>
<button type="button" class="help">?</button>
<script src="https://cdn.jsdelivr.net/npm/bootstrap@5.3.0/dist/js/bootstrap.bundle.min.js"></script>
</body>
</html>
